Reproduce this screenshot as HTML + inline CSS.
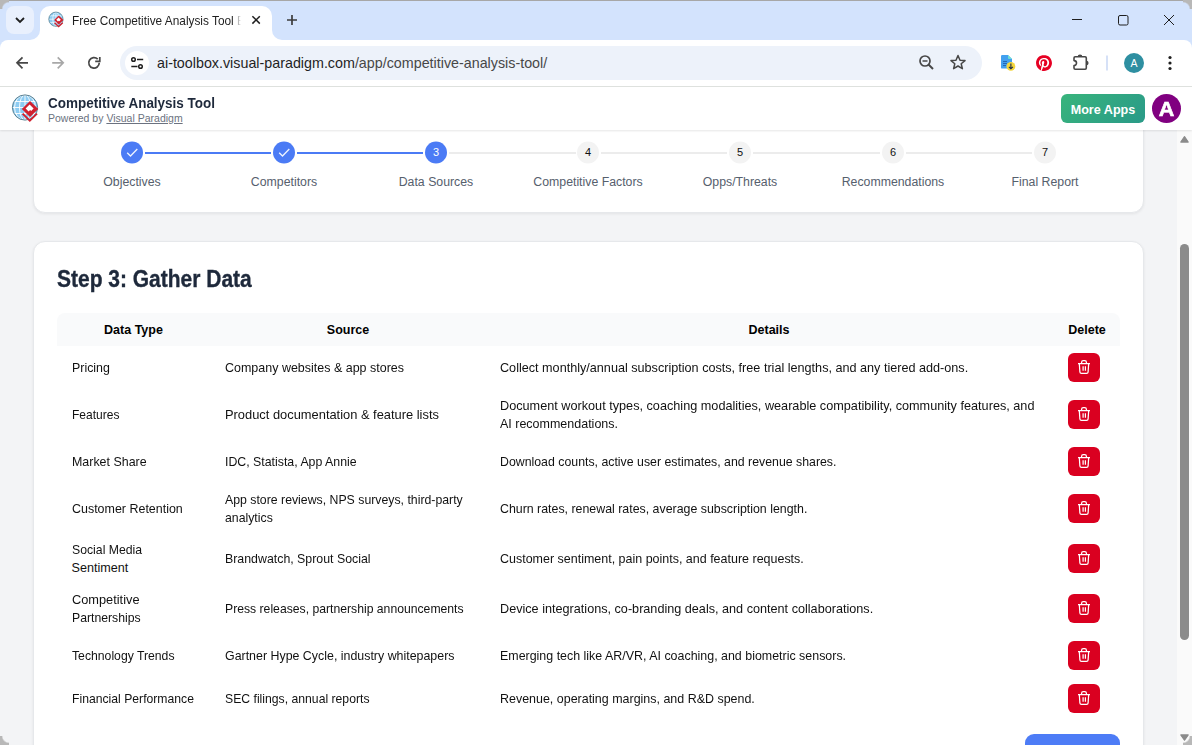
<!DOCTYPE html>
<html><head><meta charset="utf-8">
<style>
*{box-sizing:border-box;margin:0;padding:0}
html,body{width:1192px;height:745px;overflow:hidden}
body{position:relative;background:#f3f4f6;font-family:"Liberation Sans",sans-serif;color:#1f1f1f}
.a{position:absolute}
.t{position:absolute;white-space:nowrap;line-height:18px}
svg{position:absolute;overflow:visible}
/* chrome */
#strip{left:0;top:0;width:1192px;height:40px;background:#d3e3fd}
#toolbar{left:0;top:40px;width:1192px;height:46px;background:#fff;border-radius:8px 8px 0 0}
#sep{left:0;top:86px;width:1192px;height:1px;background:#dfe2df}
#omni{left:120px;top:46px;width:862px;height:34px;border-radius:17px;background:#edf2fa}
/* app */
#hdr{left:0;top:87px;width:1192px;height:43px;background:#fff;box-shadow:0 1px 2px rgba(0,0,0,.10);z-index:5}
.card{background:#fff;border:1px solid #e6e8eb;border-radius:12px;box-shadow:0 1px 3px rgba(0,0,0,.07)}
.step{position:absolute;top:141px;transform:translateY(0.5px);width:22px;height:22px;border-radius:50%;text-align:center;font-size:11px;line-height:20px}
.done{background:#4b7bf5;color:#fff}
.todo{background:#f3f3f3;color:#111}
.line{position:absolute;top:152px;height:2px}
.lbl{position:absolute;top:173px;width:152px;text-align:center;font-size:12.3px;color:#56606d;line-height:18px;white-space:nowrap}
.th{position:absolute;top:321px;font-weight:bold;font-size:12.5px;color:#000;line-height:18px;text-align:center;white-space:nowrap}
.td{position:absolute;font-size:12.6px;color:#111;line-height:18px;white-space:nowrap;transform-origin:0 0}
.del{position:absolute;left:1068px;width:32px;height:29px;border-radius:6px;background:#da0020}
</style></head><body>

<!-- top window border -->
<div class="a" style="left:0;top:0;width:1192px;height:1px;background:#a7a7a7"></div>
<div id="strip" class="a" style="top:1px;height:49px;border-radius:8px 8px 0 0"></div>

<!-- tab flares -->
<div class="a" style="left:30px;top:30px;width:10px;height:10px;background:#fff"></div>
<div class="a" style="left:20px;top:20px;width:20px;height:20px;background:#d3e3fd;border-bottom-right-radius:10px"></div>
<div class="a" style="left:272px;top:30px;width:10px;height:10px;background:#fff"></div>
<div class="a" style="left:272px;top:20px;width:20px;height:20px;background:#d3e3fd;border-bottom-left-radius:10px"></div>
<!-- tab -->
<div class="a" style="left:40px;top:6px;width:232px;height:34px;background:#fff;border-radius:10px 10px 0 0"></div>
<!-- dropdown -->
<div class="a" style="left:6px;top:6px;width:28px;height:28px;border-radius:8px;background:#e9f0fd"></div>
<svg style="left:0;top:0" width="40" height="40"><path d="M16 18 L20 22 L24 18" fill="none" stroke="#1f1f1f" stroke-width="1.8"/></svg>

<!-- favicon -->
<svg style="left:47.5px;top:11.4px" width="17" height="17" viewBox="0 0 30 30">
<defs><clipPath id="gc2"><circle cx="14" cy="14.5" r="12.5"/></clipPath></defs>
<circle cx="14" cy="14.5" r="12.6" fill="#8dccf2"/>
<g clip-path="url(#gc2)" stroke="#fff" stroke-width="1.2" fill="none">
<path d="M0 8.5 H28 M0 14.5 H28 M0 20.5 H28 M14 0 V30"/>
<ellipse cx="14" cy="14.5" rx="5.5" ry="12.6"/>
</g>
<circle cx="14" cy="14.5" r="12.6" fill="none" stroke="#4a7384" stroke-width="1.2"/>
<path d="M19 8 L27.3 16 L19 24 L10.8 16 Z" fill="#d0202e"/>
<path d="M18.6 11.6 L22.6 15.6 L20.2 18 L19.2 17 L17.6 18.6 L14.6 15.6 Z" fill="#fff"/>
<path d="M11.6 20.6 L18.8 27.6 L26 20.6" fill="none" stroke="#d0202e" stroke-width="2.4"/>
</svg>
<div class="t" style="left:72px;top:12px;font-size:11.85px;color:#1f1f1f;width:170px;overflow:hidden;-webkit-mask-image:linear-gradient(90deg,#000 0,#000 161px,transparent 169px)">Free Competitive Analysis Tool Builder</div>
<svg style="left:0;top:0" width="300" height="40"><path d="M252.4 16.2 L259.8 23.6 M259.8 16.2 L252.4 23.6" stroke="#1f1f1f" stroke-width="1.5"/>
<path d="M292 15 V25 M287 20 H297" stroke="#3c3c3c" stroke-width="1.7"/></svg>

<!-- window controls -->
<svg style="left:1060px;top:0" width="132" height="40">
<path d="M12 19.5 H22" stroke="#1f1f1f" stroke-width="1"/>
<rect x="58.5" y="15.5" width="9.5" height="9.5" rx="1.5" fill="none" stroke="#1f1f1f" stroke-width="1"/>
<path d="M104 15 L114 25 M114 15 L104 25" stroke="#1f1f1f" stroke-width="1"/>
</svg>

<!-- toolbar -->
<div id="toolbar" class="a"></div>
<div id="sep" class="a"></div>
<svg style="left:0;top:40px" width="120" height="46">
<path d="M28 22.8 H17.5 M22.5 17.3 L17 22.8 L22.5 28.3" fill="none" stroke="#474747" stroke-width="1.7"/>
<path d="M52.2 22.8 H62.7 M57.7 17.3 L63.2 22.8 L57.7 28.3" fill="none" stroke="#a8a8a8" stroke-width="1.7"/>
<path d="M99.25 22.8 A5.25 5.25 0 1 1 97.7 19.1" fill="none" stroke="#474747" stroke-width="1.7"/>
<path d="M95.2 21.3 H99.8 V17" fill="none" stroke="#474747" stroke-width="1.7"/>
</svg>
<div id="omni" class="a"></div>
<div class="a" style="left:125px;top:51px;width:24px;height:24px;border-radius:50%;background:#fff"></div>
<svg style="left:125px;top:51px" width="24" height="24">
<circle cx="8.5" cy="8.5" r="1.8" fill="none" stroke="#1f1f1f" stroke-width="1.5"/>
<path d="M12 8.5 H18.2" stroke="#1f1f1f" stroke-width="1.5"/>
<circle cx="15.5" cy="15.5" r="1.8" fill="none" stroke="#1f1f1f" stroke-width="1.5"/>
<path d="M6.3 15.5 H12.5" stroke="#1f1f1f" stroke-width="1.5"/>
</svg>
<div class="t" style="left:157px;top:54px;font-size:14.3px;color:#1f1f1f">ai-toolbox.visual-paradigm.com<span style="color:#474747">/app/competitive-analysis-tool/</span></div>

<!-- right toolbar icons -->
<svg style="left:900px;top:40px" width="292" height="46">
<circle cx="25" cy="21" r="5" fill="none" stroke="#474747" stroke-width="1.7"/>
<path d="M22.5 21 H27.5" stroke="#474747" stroke-width="1.5"/>
<path d="M28.5 24.5 L33 29" stroke="#474747" stroke-width="1.9"/>
<path d="M58 15.5 L60 20.3 L65 20.6 L61.2 23.8 L62.4 28.7 L58 26 L53.6 28.7 L54.8 23.8 L51 20.6 L56 20.3 Z" fill="none" stroke="#474747" stroke-width="1.5" stroke-linejoin="round"/>
<path d="M102.2 15 H108 L112 19 V27.5 Q112 28.6 110.9 28.6 H102.2 Q101 28.6 101 27.4 V16.2 Q101 15 102.2 15 Z" fill="#42a0ef"/>
<path d="M108 15 L112 19 H109 Q108 19 108 18 Z" fill="#6ee0d2"/>
<path d="M103 21.5 H107 M103 23.5 H107 M103 25.5 H106" stroke="#2467b5" stroke-width="1"/>
<circle cx="110.9" cy="26.4" r="4.4" fill="#f4d63c"/>
<path d="M110.9 23.6 V28.6 M108.9 26.8 L110.9 28.8 L112.9 26.8" fill="none" stroke="#1b2a4a" stroke-width="1.1"/>
<g transform="translate(136 15) scale(0.667)"><path fill="#e60023" d="M12.017 0C5.396 0 .029 5.367.029 11.987c0 5.079 3.158 9.417 7.618 11.162-.105-.949-.199-2.403.041-3.439.219-.937 1.406-5.957 1.406-5.957s-.359-.72-.359-1.781c0-1.663.967-2.911 2.168-2.911 1.024 0 1.518.769 1.518 1.688 0 1.029-.653 2.567-.992 3.992-.285 1.193.6 2.165 1.775 2.165 2.128 0 3.768-2.245 3.768-5.487 0-2.861-2.063-4.869-5.008-4.869-3.41 0-5.409 2.562-5.409 5.199 0 1.033.394 2.143.889 2.741.099.12.112.225.085.345-.09.375-.293 1.199-.334 1.363-.053.225-.172.271-.401.165-1.495-.69-2.433-2.878-2.433-4.646 0-3.776 2.748-7.252 7.92-7.252 4.158 0 7.392 2.967 7.392 6.923 0 4.135-2.607 7.462-6.233 7.462-1.214 0-2.354-.629-2.758-1.379l-.749 2.848c-.269 1.045-1.004 2.352-1.498 3.146 1.123.345 2.306.535 3.55.535 6.607 0 11.985-5.365 11.985-11.987C23.97 5.39 18.592.026 11.985.026L12.017 0z"/></g>
<path d="M175.2 16.8 H185.1 Q186.3 16.8 186.3 18 V28.1 Q186.3 29.3 185.1 29.3 H175.2 Q174 29.3 174 28.1 V25.6 A2.5 2.5 0 0 0 174 20.6 V18 Q174 16.8 175.2 16.8 Z" fill="none" stroke="#474747" stroke-width="1.6" stroke-linejoin="round"/>
<path d="M177.6 16.9 A2.4 2.4 0 0 1 182.4 16.9 Z" fill="#474747"/>
<path d="M186.2 20.7 A2.4 2.4 0 0 1 186.2 25.5 Z" fill="#474747"/>
<path d="M207 15.5 V30.5" stroke="#c9d7f5" stroke-width="1.5"/>
<circle cx="234" cy="23" r="10" fill="#2e8fa1"/>
<circle cx="270" cy="17.5" r="1.6" fill="#1f1f1f"/><circle cx="270" cy="23" r="1.6" fill="#1f1f1f"/><circle cx="270" cy="28.5" r="1.6" fill="#1f1f1f"/>
</svg>
<div class="t" style="left:1124px;top:54px;width:20px;text-align:center;font-size:10.5px;color:#fff">A</div>

<!-- page content -->
<div class="card a" style="left:33px;top:100px;width:1111px;height:113px"></div>
<div class="card a" style="left:33px;top:241px;width:1111px;height:600px"></div>

<!-- app header -->
<div id="hdr" class="a"></div>
<svg style="left:11px;top:93px;z-index:6" width="30" height="30" viewBox="0 0 30 30">
<defs><clipPath id="gc"><circle cx="14" cy="14.5" r="12.5"/></clipPath></defs>
<circle cx="14" cy="14.5" r="12.6" fill="#8dccf2"/>
<g clip-path="url(#gc)" stroke="#fff" stroke-width="0.9" fill="none">
<path d="M0 8.5 H28 M0 14.5 H28 M0 20.5 H28 M14 0 V30"/>
<ellipse cx="14" cy="14.5" rx="5.5" ry="12.6"/>
<ellipse cx="14" cy="14.5" rx="10.5" ry="12.6"/>
</g>
<circle cx="14" cy="14.5" r="12.6" fill="none" stroke="#4a7384" stroke-width="0.9"/>
<path d="M19 8 L27.3 16 L19 24 L10.8 16 Z" fill="#d0202e"/>
<path d="M18.6 11.6 L22.6 15.6 L20.2 18 L19.2 17 L17.6 18.6 L14.6 15.6 Z" fill="#fff"/>
<path d="M11.6 20.6 L18.8 27.6 L26 20.6" fill="none" stroke="#d0202e" stroke-width="2"/>
</svg>
<div class="t" style="left:48px;top:94px;font-size:14px;font-weight:bold;color:#1e293b;z-index:6;transform:scaleX(0.963);transform-origin:0 0">Competitive Analysis Tool</div>
<div class="t" style="left:48px;top:110px;font-size:10.5px;color:#6b7280;z-index:6;line-height:16px">Powered by <span style="text-decoration:underline">Visual Paradigm</span></div>
<div class="a" style="left:1061px;top:94px;width:84px;height:29px;border-radius:6px;background:linear-gradient(135deg,#38b47c,#2a9a88);z-index:6"></div>
<div class="t" style="left:1061px;top:101px;width:84px;text-align:center;font-size:12.6px;font-weight:bold;color:#fff;z-index:6">More Apps</div>
<div class="a" style="left:1152px;top:94px;width:29px;height:29px;border-radius:50%;background:#800080;z-index:6"></div>
<div class="t" style="left:1152px;top:99px;width:29px;text-align:center;font-size:20.5px;line-height:20px;transform:scaleX(1.05);font-weight:bold;color:#fff;-webkit-text-stroke:0.6px #fff;z-index:6">A</div>

<!-- stepper -->
<div class="line" style="left:145px;width:126px;background:#4b7bf5"></div>
<div class="line" style="left:297px;width:126px;background:#4b7bf5"></div>
<div class="line" style="left:449px;width:127px;background:#ececec"></div>
<div class="line" style="left:601px;width:126px;background:#ececec"></div>
<div class="line" style="left:753px;width:127px;background:#ececec"></div>
<div class="line" style="left:906px;width:126px;background:#ececec"></div>

<div class="step done" style="left:121px"><svg style="left:0;top:0" width="22" height="22"><path d="M6.2 11.2 L9.5 14.5 L16.3 7.5" fill="none" stroke="#eef3ff" stroke-width="1.3"/></svg></div>
<div class="step done" style="left:273px"><svg style="left:0;top:0" width="22" height="22"><path d="M6.2 11.2 L9.5 14.5 L16.3 7.5" fill="none" stroke="#eef3ff" stroke-width="1.3"/></svg></div>
<div class="step done" style="left:425px">3</div>
<div class="step todo" style="left:577px">4</div>
<div class="step todo" style="left:729px">5</div>
<div class="step todo" style="left:882px">6</div>
<div class="step todo" style="left:1034px">7</div>

<div class="lbl" style="left:56px">Objectives</div>
<div class="lbl" style="left:208px">Competitors</div>
<div class="lbl" style="left:360px">Data Sources</div>
<div class="lbl" style="left:512px">Competitive Factors</div>
<div class="lbl" style="left:664px">Opps/Threats</div>
<div class="lbl" style="left:817px">Recommendations</div>
<div class="lbl" style="left:969px">Final Report</div>

<!-- heading -->
<div class="t" style="left:57px;top:265px;font-size:23.2px;line-height:28px;font-weight:bold;color:#1e293b;-webkit-text-stroke:0.35px #1e293b;transform:scaleX(0.905);transform-origin:0 0">Step 3: Gather Data</div>

<!-- table header -->
<div class="a" style="left:57px;top:313px;width:1063px;height:33px;background:#f9fafb;border-radius:8px 8px 0 0"></div>
<div class="th" style="left:57px;width:153px">Data Type</div>
<div class="th" style="left:210px;width:276px">Source</div>
<div class="th" style="left:486px;width:566px">Details</div>
<div class="th" style="left:1052px;width:70px">Delete</div>

<!-- rows -->
<div id="rows">
<div class="td" style="left:71.6px;top:359.1px;transform:scaleX(0.9846)">Pricing</div>
<div class="td" style="left:224.8px;top:359.1px;transform:scaleX(0.9911)">Company websites &amp; app stores</div>
<div class="td" style="left:500.3px;top:359.1px;transform:scaleX(1.0026)">Collect monthly/annual subscription costs, free trial lengths, and any tiered add-ons.</div>
<div class="del" style="top:353px"><svg style="left:0;top:0" width="32" height="29"><path d="M10 10.5 H22 M13.6 10.5 V9.3 Q13.6 7.6 15.3 7.6 H16.7 Q18.4 7.6 18.4 9.3 V10.5 M11.3 10.5 L11.9 19 Q12 20.3 13.4 20.3 H18.6 Q20 20.3 20.1 19 L20.7 10.5 M15.1 13.2 V17.8 M17.4 13.2 V17.8" fill="none" stroke="#fff" stroke-width="1.25" stroke-linejoin="round"/></svg></div>
<div class="td" style="left:71.6px;top:405.5px;transform:scaleX(0.9555)">Features</div>
<div class="td" style="left:224.8px;top:405.5px;transform:scaleX(1.0220)">Product documentation &amp; feature lists</div>
<div class="td" style="left:500.3px;top:396.5px;transform:scaleX(1.0064)">Document workout types, coaching modalities, wearable compatibility, community features, and</div>
<div class="td" style="left:500.3px;top:414.5px;transform:scaleX(0.9916)">AI recommendations.</div>
<div class="del" style="top:400px"><svg style="left:0;top:0" width="32" height="29"><path d="M10 10.5 H22 M13.6 10.5 V9.3 Q13.6 7.6 15.3 7.6 H16.7 Q18.4 7.6 18.4 9.3 V10.5 M11.3 10.5 L11.9 19 Q12 20.3 13.4 20.3 H18.6 Q20 20.3 20.1 19 L20.7 10.5 M15.1 13.2 V17.8 M17.4 13.2 V17.8" fill="none" stroke="#fff" stroke-width="1.25" stroke-linejoin="round"/></svg></div>
<div class="td" style="left:71.6px;top:452.6px;transform:scaleX(0.9869)">Market Share</div>
<div class="td" style="left:224.8px;top:452.6px;transform:scaleX(0.9791)">IDC, Statista, App Annie</div>
<div class="td" style="left:500.3px;top:452.6px;transform:scaleX(0.9789)">Download counts, active user estimates, and revenue shares.</div>
<div class="del" style="top:447px"><svg style="left:0;top:0" width="32" height="29"><path d="M10 10.5 H22 M13.6 10.5 V9.3 Q13.6 7.6 15.3 7.6 H16.7 Q18.4 7.6 18.4 9.3 V10.5 M11.3 10.5 L11.9 19 Q12 20.3 13.4 20.3 H18.6 Q20 20.3 20.1 19 L20.7 10.5 M15.1 13.2 V17.8 M17.4 13.2 V17.8" fill="none" stroke="#fff" stroke-width="1.25" stroke-linejoin="round"/></svg></div>
<div class="td" style="left:71.6px;top:499.7px;transform:scaleX(0.9892)">Customer Retention</div>
<div class="td" style="left:224.8px;top:490.7px;transform:scaleX(0.9762)">App store reviews, NPS surveys, third-party</div>
<div class="td" style="left:224.8px;top:508.7px;transform:scaleX(0.9755)">analytics</div>
<div class="td" style="left:500.3px;top:499.7px;transform:scaleX(0.9821)">Churn rates, renewal rates, average subscription length.</div>
<div class="del" style="top:493.5px"><svg style="left:0;top:0" width="32" height="29"><path d="M10 10.5 H22 M13.6 10.5 V9.3 Q13.6 7.6 15.3 7.6 H16.7 Q18.4 7.6 18.4 9.3 V10.5 M11.3 10.5 L11.9 19 Q12 20.3 13.4 20.3 H18.6 Q20 20.3 20.1 19 L20.7 10.5 M15.1 13.2 V17.8 M17.4 13.2 V17.8" fill="none" stroke="#fff" stroke-width="1.25" stroke-linejoin="round"/></svg></div>
<div class="td" style="left:71.6px;top:541.1px;transform:scaleX(0.9723)">Social Media</div>
<div class="td" style="left:71.6px;top:559.1px;transform:scaleX(1.0000)">Sentiment</div>
<div class="td" style="left:224.8px;top:550.1px;transform:scaleX(0.9812)">Brandwatch, Sprout Social</div>
<div class="td" style="left:500.3px;top:550.1px;transform:scaleX(0.9908)">Customer sentiment, pain points, and feature requests.</div>
<div class="del" style="top:543.5px"><svg style="left:0;top:0" width="32" height="29"><path d="M10 10.5 H22 M13.6 10.5 V9.3 Q13.6 7.6 15.3 7.6 H16.7 Q18.4 7.6 18.4 9.3 V10.5 M11.3 10.5 L11.9 19 Q12 20.3 13.4 20.3 H18.6 Q20 20.3 20.1 19 L20.7 10.5 M15.1 13.2 V17.8 M17.4 13.2 V17.8" fill="none" stroke="#fff" stroke-width="1.25" stroke-linejoin="round"/></svg></div>
<div class="td" style="left:71.6px;top:591.2px;transform:scaleX(1.0152)">Competitive</div>
<div class="td" style="left:71.6px;top:609.2px;transform:scaleX(0.9715)">Partnerships</div>
<div class="td" style="left:224.8px;top:600.2px;transform:scaleX(0.9683)">Press releases, partnership announcements</div>
<div class="td" style="left:500.3px;top:600.2px;transform:scaleX(1.0038)">Device integrations, co-branding deals, and content collaborations.</div>
<div class="del" style="top:594px"><svg style="left:0;top:0" width="32" height="29"><path d="M10 10.5 H22 M13.6 10.5 V9.3 Q13.6 7.6 15.3 7.6 H16.7 Q18.4 7.6 18.4 9.3 V10.5 M11.3 10.5 L11.9 19 Q12 20.3 13.4 20.3 H18.6 Q20 20.3 20.1 19 L20.7 10.5 M15.1 13.2 V17.8 M17.4 13.2 V17.8" fill="none" stroke="#fff" stroke-width="1.25" stroke-linejoin="round"/></svg></div>
<div class="td" style="left:71.6px;top:646.7px;transform:scaleX(0.9698)">Technology Trends</div>
<div class="td" style="left:224.8px;top:646.7px;transform:scaleX(0.9846)">Gartner Hype Cycle, industry whitepapers</div>
<div class="td" style="left:500.3px;top:646.7px;transform:scaleX(0.9868)">Emerging tech like AR/VR, AI coaching, and biometric sensors.</div>
<div class="del" style="top:641px"><svg style="left:0;top:0" width="32" height="29"><path d="M10 10.5 H22 M13.6 10.5 V9.3 Q13.6 7.6 15.3 7.6 H16.7 Q18.4 7.6 18.4 9.3 V10.5 M11.3 10.5 L11.9 19 Q12 20.3 13.4 20.3 H18.6 Q20 20.3 20.1 19 L20.7 10.5 M15.1 13.2 V17.8 M17.4 13.2 V17.8" fill="none" stroke="#fff" stroke-width="1.25" stroke-linejoin="round"/></svg></div>
<div class="td" style="left:71.6px;top:689.5px;transform:scaleX(0.9680)">Financial Performance</div>
<div class="td" style="left:224.8px;top:689.5px;transform:scaleX(0.9692)">SEC filings, annual reports</div>
<div class="td" style="left:500.3px;top:689.5px;transform:scaleX(0.9891)">Revenue, operating margins, and R&amp;D spend.</div>
<div class="del" style="top:684px"><svg style="left:0;top:0" width="32" height="29"><path d="M10 10.5 H22 M13.6 10.5 V9.3 Q13.6 7.6 15.3 7.6 H16.7 Q18.4 7.6 18.4 9.3 V10.5 M11.3 10.5 L11.9 19 Q12 20.3 13.4 20.3 H18.6 Q20 20.3 20.1 19 L20.7 10.5 M15.1 13.2 V17.8 M17.4 13.2 V17.8" fill="none" stroke="#fff" stroke-width="1.25" stroke-linejoin="round"/></svg></div>
</div>

<!-- blue button -->
<div class="a" style="left:1025px;top:734px;width:95px;height:40px;border-radius:9px;background:#4d7cf6"></div>
<!-- scrollbar -->
<div class="a" style="left:1177px;top:130px;width:15px;height:615px;background:#fafafa"></div>
<div class="a" style="left:1180px;top:244px;width:9px;height:396px;border-radius:5px;background:#8b8b8b"></div>
<svg style="left:1177px;top:130px" width="15" height="615">
<path d="M3.8 12.1 L7.5 6.7 L11.2 12.1 Z" fill="#8b8b8b" stroke="#8b8b8b" stroke-width="1.2" stroke-linejoin="round"/>
<path d="M3.8 604.9 L11.2 604.9 L7.5 610.2 Z" fill="#8b8b8b" stroke="#8b8b8b" stroke-width="1.2" stroke-linejoin="round"/>
</svg>
<!-- window corners -->
<div class="a" style="left:0;top:0;width:9px;height:9px;background:radial-gradient(circle at 9px 9px,transparent 6px,#b8b8b8 7.5px);z-index:20"></div>
<div class="a" style="left:1183px;top:0;width:9px;height:9px;background:radial-gradient(circle at 0 9px,transparent 6px,#b8b8b8 7.5px);z-index:20"></div>
<div class="a" style="left:0;top:736px;width:9px;height:9px;background:radial-gradient(circle at 9px 0,transparent 6px,#b8b8b8 7.5px);z-index:20"></div>
<div class="a" style="left:1183px;top:736px;width:9px;height:9px;background:radial-gradient(circle at 0 0,transparent 6px,#b8b8b8 7.5px);z-index:20"></div>
</body></html>
